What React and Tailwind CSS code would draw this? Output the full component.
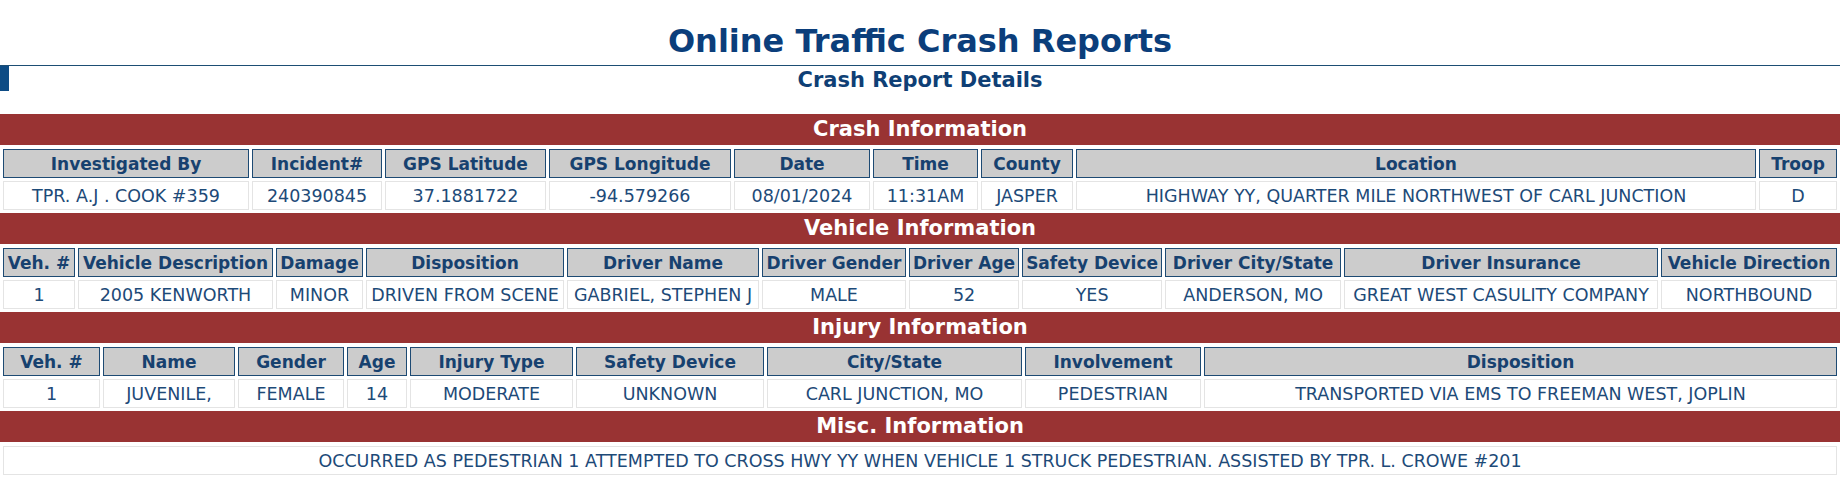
import React from "react";

const crashCols = [
  { h: "Investigated By", w: "w-[246px]", v: "TPR. A.J . COOK #359" },
  { h: "Incident#", w: "w-[130px]", v: "240390845" },
  { h: "GPS Latitude", w: "w-[161px]", v: "37.1881722" },
  { h: "GPS Longitude", w: "w-[182px]", v: "-94.579266" },
  { h: "Date", w: "w-[136px]", v: "08/01/2024" },
  { h: "Time", w: "w-[105px]", v: "11:31AM" },
  { h: "County", w: "w-[92px]", v: "JASPER" },
  { h: "Location", w: "", v: "HIGHWAY YY, QUARTER MILE NORTHWEST OF CARL JUNCTION" },
  { h: "Troop", w: "w-[78px]", v: "D" },
];

const vehicleCols = [
  { h: "Veh. #", w: "w-[72px]", v: "1" },
  { h: "Vehicle Description", w: "w-[195px]", v: "2005 KENWORTH" },
  { h: "Damage", w: "w-[87px]", v: "MINOR" },
  { h: "Disposition", w: "w-[198px]", v: "DRIVEN FROM SCENE" },
  { h: "Driver Name", w: "w-[192px]", v: "GABRIEL, STEPHEN J" },
  { h: "Driver Gender", w: "w-[144px]", v: "MALE" },
  { h: "Driver Age", w: "w-[110px]", v: "52" },
  { h: "Safety Device", w: "w-[140px]", v: "YES" },
  { h: "Driver City/State", w: "w-[176px]", v: "ANDERSON, MO" },
  { h: "Driver Insurance", w: "", v: "GREAT WEST CASULITY COMPANY" },
  { h: "Vehicle Direction", w: "w-[176px]", v: "NORTHBOUND" },
];

const injuryCols = [
  { h: "Veh. #", w: "w-[97px]", v: "1" },
  { h: "Name", w: "w-[132px]", v: "JUVENILE," },
  { h: "Gender", w: "w-[106px]", v: "FEMALE" },
  { h: "Age", w: "w-[60px]", v: "14" },
  { h: "Injury Type", w: "w-[163px]", v: "MODERATE" },
  { h: "Safety Device", w: "w-[188px]", v: "UNKNOWN" },
  { h: "City/State", w: "w-[255px]", v: "CARL JUNCTION, MO" },
  { h: "Involvement", w: "w-[176px]", v: "PEDESTRIAN" },
  { h: "Disposition", w: "", v: "TRANSPORTED VIA EMS TO FREEMAN WEST, JOPLIN" },
];

function SectionBar({ title }) {
  return (
    <div className="h-[31px] mb-[1px] bg-[#993333] text-white text-center font-bold text-[21px] leading-[31px]">
      {title}
    </div>
  );
}

function DataTable({ cols }) {
  return (
    <table className="w-full border-separate border-spacing-[3px]">
      <thead>
        <tr>
          {cols.map((c) => (
            <th
              key={c.h}
              className={`${c.w} h-[29px] px-[3px] py-0 bg-[#cccccc] border border-[#1d4a73] text-[#17416f] font-bold text-[17px] leading-[20px] text-center whitespace-nowrap`}
            >
              {c.h}
            </th>
          ))}
        </tr>
      </thead>
      <tbody>
        <tr>
          {cols.map((c) => (
            <td
              key={c.h}
              className="h-[29px] px-[3px] py-0 bg-white border border-[#e4e4e4] text-[#1d4a78] text-[17.5px] leading-[20px] text-center whitespace-nowrap"
            >
              {c.v}
            </td>
          ))}
        </tr>
      </tbody>
    </table>
  );
}

export default function App() {
  return (
    <div className="w-[1840px] bg-white font-['DejaVu_Sans',sans-serif]">
      <div className="pt-[23px] pb-[5px] border-b border-[#1d4e74] text-center text-[32px] leading-[37px] font-bold text-[#0b3e7b]">
        Online Traffic Crash Reports
      </div>
      <div className="flex items-start h-[48px]">
        <div className="w-[9px] h-[25px] bg-[#0e4c85]" />
        <div className="flex-1 pr-[9px] pt-[2px] text-center text-[21px] leading-[24px] font-bold text-[#0f3f75]">
          Crash Report Details
        </div>
      </div>

      <SectionBar title="Crash Information" />
      <DataTable cols={crashCols} />

      <SectionBar title="Vehicle Information" />
      <DataTable cols={vehicleCols} />

      <SectionBar title="Injury Information" />
      <DataTable cols={injuryCols} />

      <SectionBar title="Misc. Information" />
      <table className="w-full border-separate border-spacing-[3px]">
        <tbody>
          <tr>
            <td className="h-[29px] px-[3px] py-0 bg-white border border-[#e4e4e4] text-[#1d4a78] text-[17.5px] leading-[20px] text-center">
              OCCURRED AS PEDESTRIAN 1 ATTEMPTED TO CROSS HWY YY WHEN VEHICLE 1 STRUCK PEDESTRIAN. ASSISTED BY TPR. L. CROWE #201
            </td>
          </tr>
        </tbody>
      </table>
    </div>
  );
}
